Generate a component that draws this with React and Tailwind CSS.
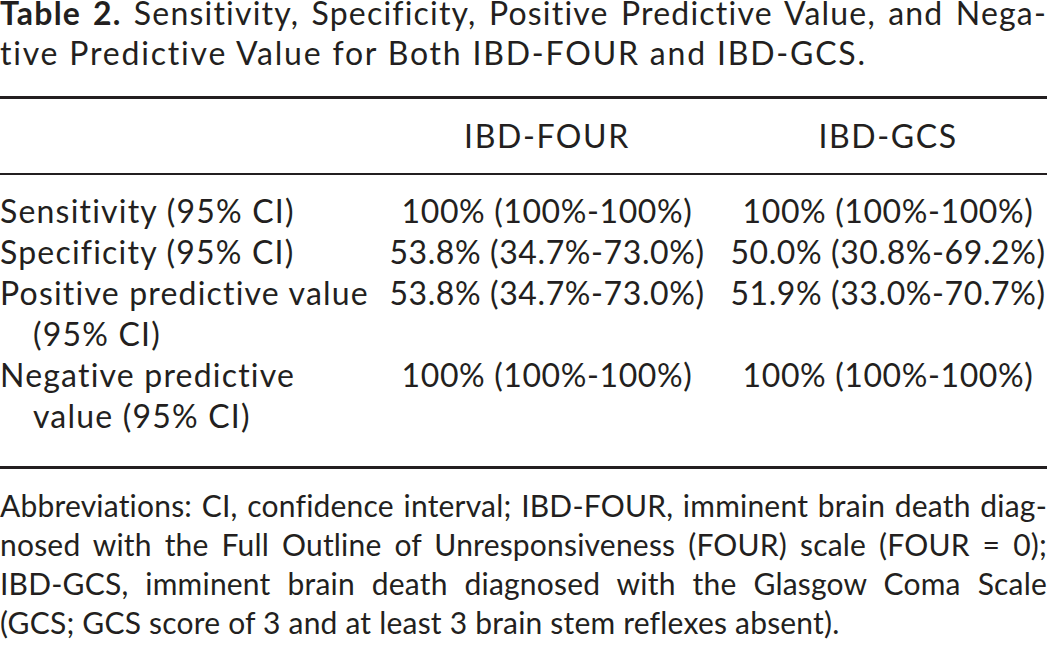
const rows = [
  { label: ['Sensitivity (95% CI)'], four: '100% (100%-100%)', gcs: '100% (100%-100%)' },
  { label: ['Specificity (95% CI)'], four: '53.8% (34.7%-73.0%)', gcs: '50.0% (30.8%-69.2%)' },
  { label: ['Positive predictive value', '(95% CI)'], four: '53.8% (34.7%-73.0%)', gcs: '51.9% (33.0%-70.7%)' },
  { label: ['Negative predictive', 'value (95% CI)'], four: '100% (100%-100%)', gcs: '100% (100%-100%)' },
]

function App() {
  return (
    <div className="w-[1047px] h-[645px] overflow-hidden bg-white text-[#231f20] font-['Lato',sans-serif] text-[32px] [font-variant-ligatures:none]">
      {/* Caption */}
      <div className="whitespace-nowrap">
        <div className="leading-[26px] tracking-[1.2px] text-justify [text-align-last:justify]">
          <span className="font-bold">Table 2.</span> Sensitivity, Specificity, Positive Predictive Value, and Nega-
        </div>
        <div className="mt-[7px] leading-[40px] tracking-[1.8px]">tive Predictive Value for Both IBD-FOUR and IBD-GCS.</div>
      </div>

      <div className="mt-[23px] h-[2.5px] bg-[#231f20]" />

      {/* Header */}
      <div className="grid grid-cols-[365px_364px_1fr] pt-[17px] pb-[17px] leading-[40px] tracking-[1.6px]">
        <div />
        <div className="text-center">IBD-FOUR</div>
        <div className="text-center">IBD-GCS</div>
      </div>

      <div className="h-[2.5px] bg-[#231f20]" />

      {/* Body */}
      <div className="pt-[15px] pb-[30px] leading-[41px] whitespace-nowrap">
        {rows.map((row, i) => (
          <div key={i} className="grid grid-cols-[365px_364px_1fr]">
            <div className="tracking-[1.2px]">
              {row.label.map((l, j) => (
                <div key={j} className={j > 0 ? 'pl-[33px]' : ''}>{l}</div>
              ))}
            </div>
            <div className="text-center tracking-[0.6px]">{row.four}</div>
            <div className="text-center tracking-[0.6px]">{row.gcs}</div>
          </div>
        ))}
      </div>

      <div className="h-[2.5px] bg-[#231f20]" />

      {/* Footnote */}
      <div className="pt-[17px] text-[30px] leading-[39.3px] tracking-[0.2px] whitespace-nowrap">
        <div className="text-justify [text-align-last:justify]">Abbreviations: CI, confidence interval; IBD-FOUR, imminent brain death diag-</div>
        <div className="text-justify [text-align-last:justify]">nosed with the Full Outline of Unresponsiveness (FOUR) scale (FOUR = 0);</div>
        <div className="text-justify [text-align-last:justify]">IBD-GCS, imminent brain death diagnosed with the Glasgow Coma Scale</div>
        <div>(GCS; GCS score of 3 and at least 3 brain stem reflexes absent).</div>
      </div>
    </div>
  )
}

export default App
